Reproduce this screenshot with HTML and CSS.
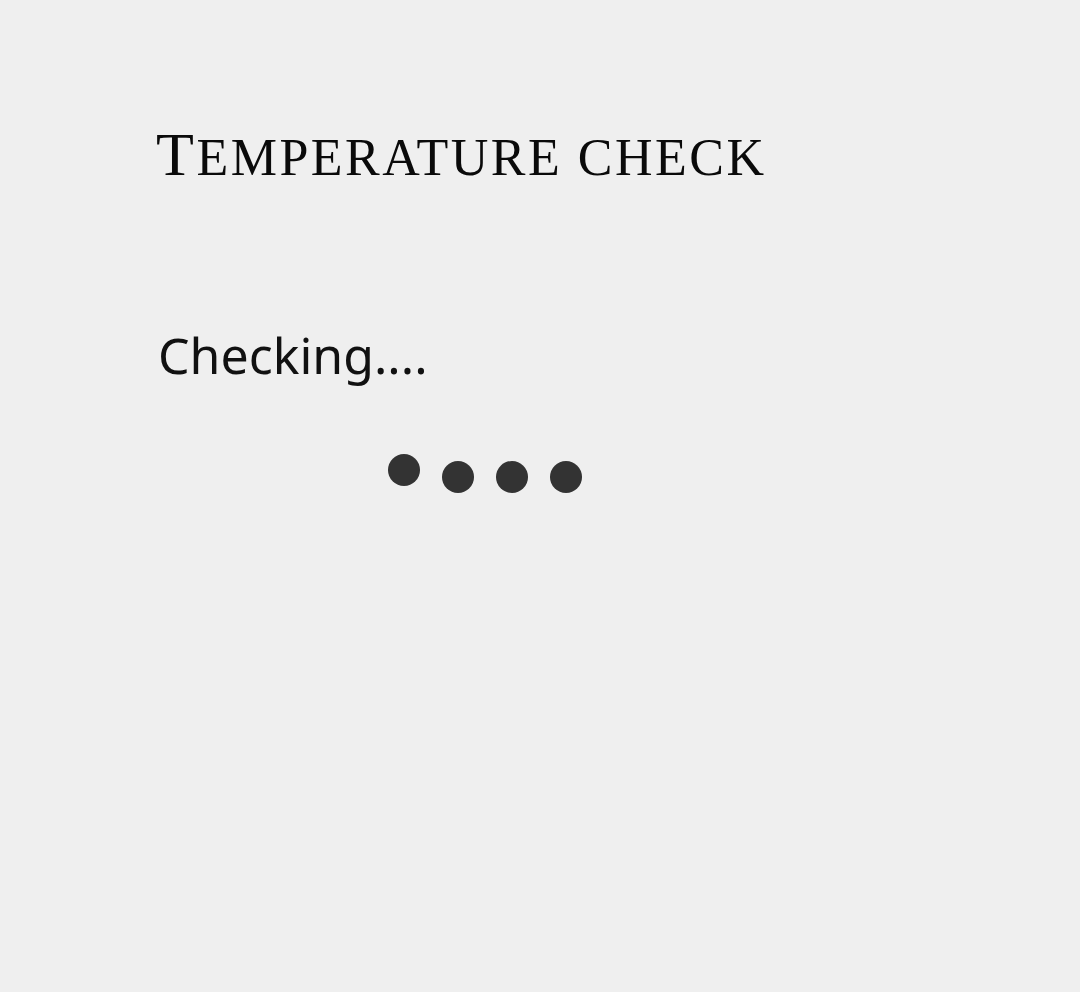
FILE: index.html
```html
<!DOCTYPE html>
<html>
<head>
<meta charset="utf-8">
<link rel="stylesheet" href="styles.css">
</head>
<body>
<main class="page">
  <h1 class="title"><span class="cap">T</span>emperature check</h1>
  <p class="status">Checking....</p>
  <div class="dots">
    <span class="dot up"></span>
    <span class="dot"></span>
    <span class="dot"></span>
    <span class="dot"></span>
  </div>
</main>
</body>
</html>
```
FILE: styles.css
```css
html, body {
  margin: 0;
  padding: 0;
  background: #efefef;
}
.page {
  padding: 122px 0 0 156px;
}
.title {
  margin: 0;
  font-family: "Liberation Serif", serif;
  font-weight: normal;
  font-size: 52px;
  text-transform: uppercase;
  letter-spacing: 2.5px;
  color: #0a0a0a;
  line-height: 64px;
}
.cap {
  font-size: 62px;
}
.status {
  margin: 135px 0 0 2px;
  font-family: "Noto Sans", sans-serif;
  font-size: 50px;
  line-height: 60px;
  color: #111;
}
.dots {
  display: flex;
  gap: 22px;
  margin: 69px 0 0 232px;
  align-items: flex-start;
}
.dot {
  width: 32px;
  height: 32px;
  border-radius: 50%;
  background: #333;
  margin-top: 7px;
}
.dot.up {
  margin-top: 0;
}
```
